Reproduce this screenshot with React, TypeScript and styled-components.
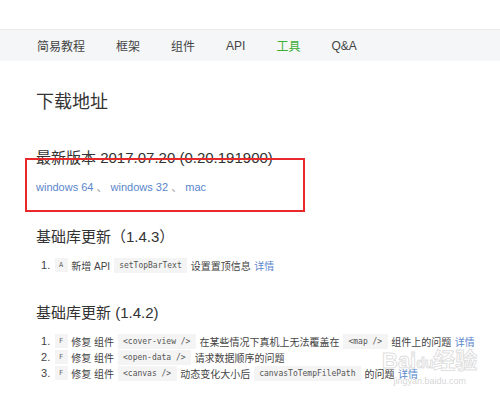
import styled, { createGlobalStyle } from 'styled-components'

// ─── Data ─────────────────────────────────────────────────────────────────────

const navItems = ['简易教程', '框架', '组件', 'API', '工具', 'Q&A']
const activeNav = '工具'

type Part = { kind: 'text' | 'code' | 'link'; value: string }
type Change = { tag: string; parts: Part[] }

const changes143: Change[] = [
  {
    tag: 'A',
    parts: [
      { kind: 'text', value: '新增 API' },
      { kind: 'code', value: 'setTopBarText' },
      { kind: 'text', value: '设置置顶信息' },
      { kind: 'link', value: '详情' },
    ],
  },
]

const changes142: Change[] = [
  {
    tag: 'F',
    parts: [
      { kind: 'text', value: '修复 组件' },
      { kind: 'code', value: '<cover-view />' },
      { kind: 'text', value: '在某些情况下真机上无法覆盖在' },
      { kind: 'code', value: '<map />' },
      { kind: 'text', value: '组件上的问题' },
      { kind: 'link', value: '详情' },
    ],
  },
  {
    tag: 'F',
    parts: [
      { kind: 'text', value: '修复 组件' },
      { kind: 'code', value: '<open-data />' },
      { kind: 'text', value: '请求数据顺序的问题' },
    ],
  },
  {
    tag: 'F',
    parts: [
      { kind: 'text', value: '修复 组件' },
      { kind: 'code', value: '<canvas />' },
      { kind: 'text', value: '动态变化大小后' },
      { kind: 'code', value: 'canvasToTempFilePath' },
      { kind: 'text', value: '的问题' },
      { kind: 'link', value: '详情' },
    ],
  },
]

// ─── Components ───────────────────────────────────────────────────────────────

function ChangeList({ items }: { items: Change[] }) {
  return (
    <List>
      {items.map((item, i) => (
        <Item key={i}>
          <Num>{i + 1}.</Num>
          <Tag>{item.tag}</Tag>
          {item.parts.map((p, j) =>
            p.kind === 'code' ? (
              <Code key={j}>{p.value}</Code>
            ) : p.kind === 'link' ? (
              <Link key={j}>{p.value}</Link>
            ) : (
              <span key={j}>{p.value}</span>
            )
          )}
        </Item>
      ))}
    </List>
  )
}

export default function App() {
  return (
    <Page>
      <GlobalStyle />
      <TopSpace />
      <Nav>
        {navItems.map((n) => (
          <NavItem key={n} $active={n === activeNav}>
            {n}
          </NavItem>
        ))}
      </Nav>

      <Main>
        <Title>下载地址</Title>

        <VersionBlock>
          <VersionTitle>最新版本 2017.07.20 (0.20.191900)</VersionTitle>
          <Downloads>
            <Link>windows 64</Link> 、 <Link>windows 32</Link> 、 <Link>mac</Link>
          </Downloads>
          <Highlight />
        </VersionBlock>

        <SectionTitle>基础库更新（1.4.3）</SectionTitle>
        <ChangeList items={changes143} />

        <SectionTitle $gap={30}>基础库更新 (1.4.2)</SectionTitle>
        <ChangeList items={changes142} />
      </Main>

      <Watermark>
        <WmBig>
          Bai<Paw>du</Paw>经验
        </WmBig>
        <WmSmall>jingyan.baidu.com</WmSmall>
      </Watermark>
    </Page>
  )
}

// ─── Styles ───────────────────────────────────────────────────────────────────

const GlobalStyle = createGlobalStyle`
  html, body {
    margin: 0;
    background: #fff;
  }
  body {
    font-family: "Liberation Sans", "Noto Sans CJK SC", sans-serif;
    color: #333;
  }
`

const Page = styled.div`
  position: relative;
  width: 500px;
  height: 399px;
  overflow: hidden;
`

const TopSpace = styled.div`
  height: 29px;
`

const Nav = styled.nav`
  display: flex;
  align-items: center;
  gap: 31px;
  height: 32px;
  padding-left: 37px;
  background: #f5f6f7;
  border-top: 1px solid #ececec;
  box-sizing: border-box;
`

const NavItem = styled.span<{ $active: boolean }>`
  font-size: 12px;
  color: ${({ $active }) => ($active ? '#3cb035' : '#444')};
`

const Main = styled.main`
  padding-left: 36px;
`

const Title = styled.h1`
  margin: 30px 0 0;
  font-size: 18px;
  font-weight: 400;
  line-height: 22px;
  color: #333;
`

const VersionBlock = styled.section`
  position: relative;
  margin-top: 35px;
`

const VersionTitle = styled.h2`
  margin: 0;
  font-size: 15px;
  font-weight: 400;
  line-height: 20px;
  color: #333;
`

const Downloads = styled.div`
  margin-top: 12px;
  font-size: 11px;
  line-height: 14px;
  color: #999;
`

const Highlight = styled.div`
  position: absolute;
  left: -11px;
  top: 10px;
  width: 280px;
  height: 54px;
  border: 2px solid #e8282b;
  box-sizing: border-box;
`

const SectionTitle = styled.h2<{ $gap?: number }>`
  margin: ${({ $gap }) => $gap ?? 33}px 0 0;
  font-size: 15px;
  font-weight: 400;
  line-height: 20px;
  color: #333;
`

const List = styled.ol`
  list-style: none;
  margin: 10px 0 0;
  padding: 0 0 0 5px;
`

const Item = styled.li`
  display: flex;
  align-items: center;
  gap: 3.5px;
  height: 16px;
  font-size: 10px;
  color: #444;
  white-space: nowrap;
`

const Num = styled.span`
  width: 10px;
  font-size: 11px;
`

const Tag = styled.span`
  padding: 0 4.5px;
  background: #f4f4f4;
  font-family: "DejaVu Sans Mono", monospace;
  font-size: 7px;
  line-height: 14px;
  color: #666;
`

const Code = styled.code`
  padding: 0 5.5px;
  background: #f4f4f4;
  font-family: "DejaVu Sans Mono", monospace;
  font-size: 8px;
  line-height: 15px;
  color: #555;
`

const Link = styled.a`
  color: #5a86cc;
  cursor: pointer;
`

const Watermark = styled.div`
  position: absolute;
  left: 382px;
  top: 348px;
  display: flex;
  flex-direction: column;
  align-items: center;
  pointer-events: none;
`

const WmBig = styled.div`
  font-family: "Liberation Sans", "Noto Sans CJK SC", sans-serif;
  font-size: 22px;
  font-weight: 700;
  line-height: 26px;
  -webkit-text-stroke: 1px rgba(195, 195, 195, 0.55);
  color: rgba(255, 255, 255, 0.2);
`

const Paw = styled.span`
  font-size: 14px;
`

const WmSmall = styled.div`
  font-family: "Liberation Sans", sans-serif;
  font-size: 9px;
  line-height: 11px;
  color: rgba(200, 200, 200, 0.75);
`
